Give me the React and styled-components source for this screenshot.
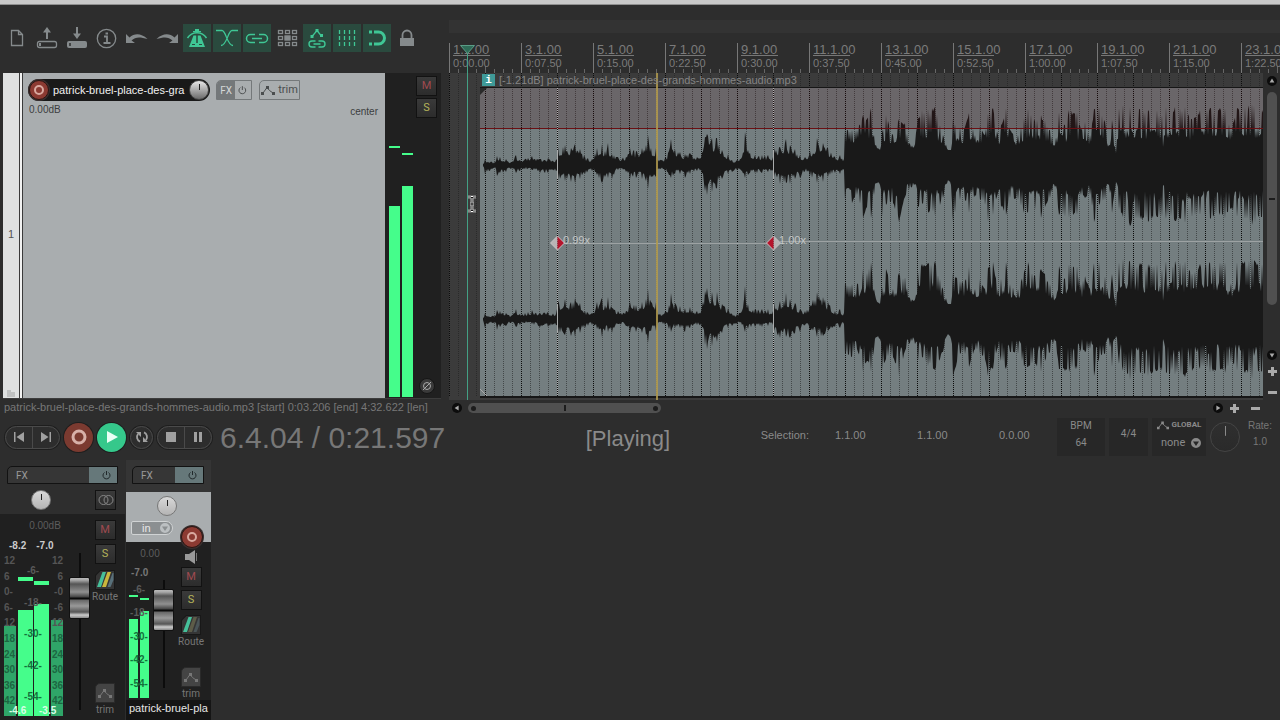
import { useState } from 'react';
import styled, { createGlobalStyle, css } from 'styled-components';

const BAR_WIDTH = 36;
const ITEM_LEFT = 31;

const marks = [
  ['1.1.00', '0:00.00'],
  ['3.1.00', '0:07.50'],
  ['5.1.00', '0:15.00'],
  ['7.1.00', '0:22.50'],
  ['9.1.00', '0:30.00'],
  ['11.1.00', '0:37.50'],
  ['13.1.00', '0:45.00'],
  ['15.1.00', '0:52.50'],
  ['17.1.00', '1:00.00'],
  ['19.1.00', '1:07.50'],
  ['21.1.00', '1:15.00'],
  ['23.1.00', '1:22.50'],
];

// [x, peak above the axis, peak below the axis]
const envelope = [
  [34, 1, 1], [36, 6, 9], [43, 3, 4], [47, 4, 4], [48, 9, 11], [51, 8, 8], [57, 6, 7], [62, 3, 4],
  [67, 10, 8], [71, 5, 6], [76, 6, 4], [83, 9, 5], [91, 6, 8], [99, 7, 8], [107, 5, 6],
  [109, 18, 15], [116, 20, 16], [122, 17, 17], [126, 21, 18], [131, 16, 14], [136, 8, 9], [143, 6, 6],
  [148, 17, 10], [153, 21, 18], [156, 14, 12], [159, 22, 13], [163, 11, 14], [169, 8, 5], [177, 8, 7],
  [181, 17, 14], [187, 14, 13], [193, 17, 14], [197, 20, 16], [199, 30, 24], [202, 17, 12], [207, 17, 12],
  [209, 5, 4], [216, 7, 6], [220, 14, 10], [222, 26, 13], [226, 16, 9], [231, 13, 9], [236, 11, 13],
  [241, 12, 9], [248, 8, 6], [253, 12, 8], [256, 28, 26], [258, 31, 30], [263, 27, 27], [268, 27, 23],
  [273, 15, 14], [279, 11, 9], [283, 5, 7], [288, 5, 5], [293, 8, 6], [296, 33, 13], [299, 15, 10],
  [306, 10, 8], [313, 10, 8], [319, 10, 7], [324, 8, 6], [325, 17, 12], [331, 18, 19], [337, 26, 18],
  [341, 20, 19], [346, 16, 14], [351, 10, 13], [356, 8, 6], [361, 14, 11], [368, 27, 18], [374, 22, 17],
  [379, 17, 12], [386, 8, 8], [391, 10, 9], [395, 6, 5], [396, 36, 35], [403, 35, 38], [408, 35, 30],
  [414, 50, 53], [418, 46, 42], [422, 57, 53], [425, 30, 30], [427, 20, 18], [431, 15, 20], [433, 32, 52],
  [437, 50, 40], [444, 30, 38], [450, 46, 57], [456, 42, 32], [460, 22, 25], [465, 18, 20], [469, 47, 42],
  [473, 55, 38], [479, 56, 47], [486, 58, 51], [491, 40, 40], [494, 30, 33], [499, 15, 15], [502, 15, 20],
  [504, 47, 57], [511, 38, 35], [516, 38, 35], [520, 52, 48], [526, 30, 30], [531, 40, 35], [536, 30, 40],
  [539, 52, 57], [544, 57, 50], [549, 30, 28], [552, 40, 42], [557, 57, 50], [561, 35, 33], [569, 30, 35],
  [575, 47, 48], [579, 57, 48], [586, 44, 45], [592, 50, 53], [596, 45, 42], [601, 35, 33], [606, 20, 22],
  [610, 53, 50], [616, 40, 52], [620, 55, 53], [628, 53, 50], [632, 35, 30], [636, 43, 33], [641, 30, 30],
  [645, 56, 57], [650, 58, 40], [656, 43, 35], [660, 20, 20], [663, 45, 48], [667, 12, 17], [670, 57, 45],
  [674, 60, 52], [681, 58, 61], [691, 56, 54], [699, 55, 57], [708, 55, 52], [713, 50, 52], [714, 18, 20],
  [717, 58, 54], [726, 58, 56], [736, 58, 58], [743, 46, 52], [751, 55, 50], [761, 57, 54], [771, 57, 50],
  [776, 57, 54], [782, 36, 44], [788, 57, 52], [796, 58, 54], [803, 61, 60], [813, 55, 52], [900, 55, 52],
];

const random = (seed) => {
  let s = seed;
  return () => {
    s = (s * 16807) % 2147483647;
    return s / 2147483647;
  };
};

const peakAt = (x, side) => {
  const i = envelope.findIndex((p) => p[0] >= x);
  if (i < 1) return envelope[0][side];
  const [a, b] = [envelope[i - 1], envelope[i]];
  return a[side] + ((b[side] - a[side]) * (x - a[0])) / (b[0] - a[0]);
};

const wavePath = (axis, seed) => {
  const next = random(seed);
  const top = [];
  const bottom = [];
  for (let x = 34; x < 880; x += 1) {
    const loud = x > 395;
    const isPeak = envelope.some((p) => p[0] === x);
    const pick = (side) => {
      const peak = peakAt(x, side);
      const floor = loud ? Math.min(peak, 12 + peak * 0.25) : peak * 0.5;
      const r = isPeak ? 1 : next();
      const spread = loud ? (r > 0.6 ? 0.6 + r * 0.4 : r * 0.6) : r * r;
      return floor + (peak - floor) * spread;
    };
    top.push(`${x} ${(axis - pick(1)).toFixed(1)}`);
    bottom.unshift(`${x} ${(axis + pick(2)).toFixed(1)}`);
  }
  return `M${top.join('L')}L${bottom.join('L')}Z`;
};

const waves = [
  { channel: 'left', d: wavePath(92, 77) },
  { channel: 'right', d: wavePath(246, 4021) },
];

/* ---------- toolbar icons ---------- */

const Icon = ({ children }) => (
  <svg width="28" height="28" viewBox="0 0 28 28" fill="none" stroke="currentColor" strokeWidth="1.3" aria-hidden="true">
    {children}
  </svg>
);

const tools = [
  { name: 'New project', icon: <path d="M8.5 6.500h7l4 4v11h-11zM15.500 6.500v4h4" /> },
  {
    name: 'Open project',
    icon: (
      <>
        <rect x="4.5" y="17.5" width="19" height="6" rx="2" />
        <path d="M14 15V6" strokeWidth="2" />
        <path d="M10 8.500 14 3l4 5.500z" fill="currentColor" stroke="none" />
        <path d="M7 19v3" strokeWidth="2" />
      </>
    ),
  },
  {
    name: 'Save project',
    icon: (
      <>
        <rect x="4" y="17" width="20" height="7" rx="2" fill="currentColor" stroke="none" />
        <path d="M14 3v8" strokeWidth="2" />
        <path d="M10 9.500 14 15l4-5.500z" fill="currentColor" stroke="none" />
        <path d="M7 19v3" stroke="#2d2d2d" strokeWidth="1.5" />
      </>
    ),
  },
  {
    name: 'Project settings',
    icon: (
      <>
        <circle cx="13.5" cy="14.5" r="9.2" />
        <path d="M11 12.500h3V19M10.500 19h7" strokeWidth="1.8" />
        <path d="M12.500 9.500h2.500" strokeWidth="2" />
      </>
    ),
  },
  {
    name: 'Undo',
    icon: <path d="M3 10v9h9l-3.500-2.500c4-4 9-3.500 16-1.500C18 9 11.500 9 6.500 13.500z" fill="currentColor" stroke="none" />,
  },
  {
    name: 'Redo',
    icon: <path d="M25 10v9h-9l3.500-2.500c-4-4-9-3.500-16-1.500C10 9 16.500 9 21.500 13.500z" fill="currentColor" stroke="none" />,
  },
  {
    name: 'Metronome',
    on: true,
    icon: (
      <>
        <path d="M4.500 14C9 7 19 7 23.500 14" strokeWidth="1.5" />
        <path d="M12 5h4v2h2v1h-8V7h2zM10.500 11.500h7L22 23H6z" fill="currentColor" stroke="none" />
        <path d="M14 11v8" stroke="#2a4a3e" strokeWidth="1.5" />
        <path d="M9 20.500h3M16 20.500h3" stroke="#2a4a3e" strokeWidth="1" />
      </>
    ),
  },
  {
    name: 'Auto crossfade',
    on: true,
    icon: <path d="M3 6.500h6c4 0 5 15 11 15M25 6.500h-6c-4 0-5 15-11 15" />,
  },
  {
    name: 'Item grouping',
    on: true,
    icon: (
      <>
        <path d="M12 10.500H7.500a4 4 0 0 0 0 8H12M16 10.500h4.500a4 4 0 0 1 0 8H16" strokeWidth="1.5" />
        <path d="M9 14.500h10" strokeWidth="1.5" />
      </>
    ),
  },
  {
    name: 'Ripple editing',
    icon: (
      <>
        {[6.5, 12.5, 18.5].map((y) =>
          [5.5, 12.5, 19.5].map((x) => <rect key={`${x}-${y}`} x={x} y={y} width="4" height="3" />),
        )}
        <rect x="12" y="12" width="5" height="4" fill="currentColor" />
      </>
    ),
  },
  {
    name: 'Move envelope points with items',
    on: true,
    icon: (
      <>
        <path d="M9 12.500 14 6.500l4 5" />
        <path d="M7.500 11h3v3h-3zM12.500 5h3v3h-3zM17 10h3v3h-3z" fill="currentColor" stroke="none" />
        <path d="M12.500 17H9a3 3 0 0 0 0 6h3.500M15.500 17H19a3 3 0 0 1 0 6h-3.500M10.500 20h7" strokeWidth="1.4" />
      </>
    ),
  },
  {
    name: 'Grid lines',
    on: true,
    icon: <path d="M6.500 6v17M11.500 6v17M16.500 6v17M21.500 6v17" strokeDasharray="4 2" />,
  },
  {
    name: 'Snapping',
    on: true,
    icon: (
      <>
        <path d="M11 8h4.500a6 6 0 0 1 0 12H11" strokeWidth="3" />
        <path d="M6 8h3M6 20h3" strokeWidth="3" />
      </>
    ),
  },
  {
    name: 'Lock',
    icon: (
      <>
        <path d="M9.500 14v-3a4.500 4.500 0 0 1 9 0v3" strokeWidth="1.8" />
        <rect x="7" y="14" width="14" height="8" fill="currentColor" stroke="none" />
      </>
    ),
  },
];

const Power = () => (
  <svg width="9" height="10" viewBox="0 0 9 10" fill="none" stroke="currentColor" aria-hidden="true">
    <path d="M2.500 2.500a3.500 3.500 0 1 0 4 0M4.500 1v4" />
  </svg>
);

const TrimShape = ({ width = 14 }) => (
  <svg width={width} height="10" viewBox="0 0 14 10" fill="none" stroke="currentColor" aria-hidden="true">
    <path d="M2 8 6 2.500l2.500 3L12 8" />
    <path d="M0 7h3v3H0zM5 1h3v3H5zM11 7h3v3h-3z" fill="currentColor" stroke="none" />
  </svg>
);

const RouteShape = ({ second, third }) => (
  <svg width="20" height="20" viewBox="0 0 20 20" aria-hidden="true">
    <path d="M5 0h15v20H0V5z" fill="#181818" />
    <path d="M5.500 1h13.500v18H1V5.500z" fill="#353535" />
    <path d="M7.500 2h3.500L6 17H2z" fill="#46c09a" />
    <path d="M12.500 2H16l-5 15H7z" fill={second} />
    <path d="M17.500 3h1v7l-3 7h-3z" fill={third} />
  </svg>
);

const Glyph = ({ d }) => (
  <svg width="10" height="10" viewBox="0 0 10 10" aria-hidden="true">
    <path d={d} fill="currentColor" />
  </svg>
);

const PLUS = 'M4 1h3v3h3v3H7v3H4V7H1V4h3z';
const MINUS = 'M1 4h9v3H1z';
const DROP = 'M5 0a5 5 0 1 0 0 10A5 5 0 0 0 5 0zM2 3.500h6L5 8z';

function Waveform() {
  return (
    <WaveSvg aria-label="Stereo waveform">
      <defs>
        <pattern id="grid" width={BAR_WIDTH} height="2" patternUnits="userSpaceOnUse">
          <path d="M0 0h1v1H0z" fill="#0c0c0c" />
          <path d="M9 0h1v1H9zM18 0h1v1h-1zM27 0h1v1h-1z" fill="#1c1c1c" fillOpacity="0.55" />
        </pattern>
      </defs>
      <rect width="100%" height="327" fill="#3b3b3b" />
      <rect x={ITEM_LEFT} y="15" width="100%" height="308" fill="#747e80" />
      <rect width="100%" height="323" fill="url(#grid)" />
      <g fill="#191919">
        {waves.map((wave) => <path key={wave.channel} d={wave.d} />)}
      </g>
      <rect x={ITEM_LEFT} y="15" width="100%" height="40" fill="#460a10" fillOpacity="0.2" />
      <rect x={ITEM_LEFT} y="14" width="100%" height="1" fill="#161616" />
      <rect x={ITEM_LEFT} y="55" width="100%" height="1" fill="#6a0f13" />
      <rect x={ITEM_LEFT} y="323" width="100%" height="2" fill="#161616" />
      <path d="M31 15h7l-7 7z" fill="#2a2a2a" />
      <path d="M31 316l7 7" stroke="#aaa" />
      <path d="M108.500 15v308M324.500 15v308" stroke="#c4c6c6" strokeDasharray="1 1" strokeOpacity="0.8" />
      <path d="M108.500 78v28M108.500 232v28M324.500 78v28M324.500 232v28" stroke="#a9abab" />
      <path d="M115 170.500h205" stroke="#9da2a3" />
      <rect x="331" y="168" width="100%" height="1" fill="#9da2a3" />
      <path d="M108.500 163v14l-7-7zM324.500 163v14l7-7z" fill="#b9b4b5" />
      <path d="M108.500 163v14l7-7zM324.500 163v14l-7-7z" fill="#b5142c" />
      <path d="M108.500 163l7 7-7 7-7-7zM324.500 163l7 7-7 7-7-7z" fill="none" stroke="#c9c4c5" />
      <text x="114" y="171">0.99x</text>
      <text x="330" y="171">1.00x</text>
      <rect x="18" width="1" height="327" fill="#43a084" />
      <rect x="207" width="2" height="327" fill="#b39b4e" fillOpacity="0.85" />
      <path d="M19 124h3l1 1 1-1h3M23 125v12M19 138h3l1-1 1 1h3M21 131h4" fill="none" stroke="#fff" strokeWidth="2.6" />
      <path d="M19 124h3l1 1 1-1h3M23 125v12M19 138h3l1-1 1 1h3M21 131h4" fill="none" stroke="#111" />
    </WaveSvg>
  );
}

function MasterMeter() {
  const outer = ['12', '6', '0', '6', '12', '18', '24', '30', '36', '42'];
  const inner = ['-6-', '-18-', '-30-', '-42-', '-54-'];
  return (
    <MeterSvg width="60" height="163" aria-label="Master level">
      <path d="M0 73h12v90H0zM47 67h12v96H47z" fill="#2fa568" />
      <path d="M14 57h15v106H14zM30 51h15v112H30z" fill="#45fd8b" />
      <path d="M14 24h15v4H14zM30 28h15v4H30z" fill="#45fd8b" />
      {outer.map((label, i) => {
        const y = 11 + Math.round(i * 15.6);
        const dashed = i === 2 || i === 3;
        return (
          <g key={y} fill={i > 4 ? '#1c6641' : '#555'}>
            <text x="0" y={y}>{dashed ? `${label}-` : label}</text>
            <text x="59" y={y} textAnchor="end">{dashed ? `-${label}` : label}</text>
          </g>
        );
      })}
      {inner.map((label, i) => (
        <text key={label} x="29" y={[21, 53, 84, 116, 147][i]} textAnchor="middle" fill={i < 2 ? '#5a5a5a' : '#14703c'}>
          {label}
        </text>
      ))}
      <text x="5" y="161" fill="#d9ffe8">-4.6</text>
      <text x="35" y="161" fill="#d9ffe8">-3.5</text>
    </MeterSvg>
  );
}

function TrackMeter() {
  const labels = ['-6-', '-18-', '-30-', '-42-', '-54-'];
  return (
    <MeterSvg width="22" height="118" aria-label="Track level">
      <path d="M1 39h9v79H1zM12 31h9v87h-9z" fill="#45fd8b" />
      <path d="M1 15h9v2H1zM12 18h9v2h-9z" fill="#45fd8b" />
      {labels.map((label, i) => (
        <text key={label} x="11" y={[13, 36, 60, 83, 107][i]} textAnchor="middle" fill={i < 2 ? '#5a5a5a' : '#14703c'}>
          {label}
        </text>
      ))}
    </MeterSvg>
  );
}

function RecordRing({ size }) {
  return (
    <RecordButton $size={size} aria-label="Record arm">
      <svg width="12" height="12" viewBox="0 0 12 12" aria-hidden="true">
        <circle cx="6" cy="6" r="4" fill="none" stroke="#d9a9a0" strokeWidth="2" />
      </svg>
    </RecordButton>
  );
}

export default function App() {
  const [trackName, setTrackName] = useState('patrick-bruel-place-des-gra');

  return (
    <Page>
      <Global />
      <TitleBar />
      <Workspace>
        <LeftPane>
          <Toolbar>
            {tools.map((tool) => (
              <ToolButton key={tool.name} $on={tool.on} aria-label={tool.name}>
                <Icon>{tool.icon}</Icon>
              </ToolButton>
            ))}
          </Toolbar>
          <Track>
            <TrackIndex>
              <span>1</span>
              <svg width="8" height="7" viewBox="0 0 8 7" aria-hidden="true">
                <path d="M0 0h4v2h4v5H0z" fill="#bfc1c1" />
              </svg>
            </TrackIndex>
            <TrackBody>
              <TrackControls>
                <NamePill>
                  <RecordRing size={20} />
                  <NameInput aria-label="Track name" value={trackName} onChange={(e) => setTrackName(e.target.value)} />
                  <Knob $size={20} type="range" defaultValue="50" aria-label="Volume" />
                </NamePill>
                <OutlineButton>
                  <FxLabel>FX</FxLabel>
                  <Power />
                </OutlineButton>
                <OutlineButton $wide>
                  <TrimShape />
                  trim
                </OutlineButton>
              </TrackControls>
              <TrackValues>
                <span>0.00dB</span>
                <span>center</span>
              </TrackValues>
            </TrackBody>
            <LevelBars>
              <LevelBar $peak={73} $level={133} />
              <LevelBar $peak={80} $level={113} />
            </LevelBars>
            <TrackSide>
              <SquareButton $color="#a04a50">M</SquareButton>
              <SquareButton $color="#b5b35a">S</SquareButton>
              <PhaseButton aria-label="Invert phase">
                <svg width="10" height="10" viewBox="0 0 10 10" fill="none" stroke="currentColor" aria-hidden="true">
                  <circle cx="5" cy="5" r="3.5" />
                  <path d="M1 9 9 1" />
                </svg>
              </PhaseButton>
            </TrackSide>
          </Track>
          <StatusLine>patrick-bruel-place-des-grands-hommes-audio.mp3 [start] 0:03.206 [end] 4:32.622 [len]</StatusLine>
        </LeftPane>
        <Arrange>
          <RegionLane />
          <Ruler>
            {marks.map(([bar, time]) => (
              <Mark key={bar}>
                <MarkBar>{bar}</MarkBar>
                <span>{time}</span>
              </Mark>
            ))}
            <EditCursor width="16" height="28" viewBox="0 0 16 28" aria-hidden="true">
              <path d="M7 8h1v20H7z" fill="#43a084" />
              <path d="M0.500 0.500h14L7.500 8.500z" fill="#2f6b57" stroke="#5b9c86" />
            </EditCursor>
          </Ruler>
          <Lanes>
            <Canvas>
              <Waveform />
              <ItemLabel>
                <InfoBadge>i</InfoBadge>
                [-1.21dB] patrick-bruel-place-des-grands-hommes-audio.mp3
              </ItemLabel>
            </Canvas>
            <VerticalScroll>
              <ArrowButton aria-label="Scroll up"><Glyph d="M5 2l3 5H2z" /></ArrowButton>
              <ScrollThumb $vertical><i /></ScrollThumb>
              <ScrollSpace />
              <ArrowButton aria-label="Scroll down"><Glyph d="M5 8l3-5H2z" /></ArrowButton>
              <ZoomButton aria-label="Zoom in vertically"><Glyph d={PLUS} /></ZoomButton>
              <ZoomDivider />
              <ZoomButton aria-label="Zoom out vertically"><Glyph d={MINUS} /></ZoomButton>
            </VerticalScroll>
          </Lanes>
          <HorizontalScroll>
            <ArrowButton aria-label="Scroll left"><Glyph d="M2 5l5-3v6z" /></ArrowButton>
            <ScrollThumb><b /><i /><b /></ScrollThumb>
            <ScrollSpace />
            <ArrowButton aria-label="Scroll right"><Glyph d="M8 5L3 2v6z" /></ArrowButton>
            <ZoomButton aria-label="Zoom in"><Glyph d={PLUS} /></ZoomButton>
            <ZoomDivider />
            <ZoomButton aria-label="Zoom out"><Glyph d={MINUS} /></ZoomButton>
          </HorizontalScroll>
        </Arrange>
      </Workspace>

      <Transport>
        <PillGroup>
          <PillButton aria-label="Go to start"><Glyph d="M0 0h1.500v10H0zM10 0v10L2.500 5z" /></PillButton>
          <PillButton aria-label="Go to end"><Glyph d="M8.500 0H10v10H8.500zM0 0v10l7.500-5z" /></PillButton>
        </PillGroup>
        <RoundButton $kind="record" aria-label="Record">
          <svg width="16" height="16" aria-hidden="true">
            <circle cx="8" cy="8" r="6" fill="none" stroke="#d8b0a8" strokeWidth="3" />
          </svg>
        </RoundButton>
        <RoundButton $kind="play" aria-label="Play">
          <svg width="12" height="12" aria-hidden="true"><path d="M1 0l11 6-11 6z" fill="#e9fff5" /></svg>
        </RoundButton>
        <RoundButton $kind="repeat" aria-label="Repeat">
          <svg width="14" height="14" fill="none" stroke="#a0a0a0" strokeWidth="1.8" aria-hidden="true">
            <path d="M9 2.400A5 5 0 0 1 11 10M5 11.600A5 5 0 0 1 3 4" />
            <path d="M1 2h5v5zM13 12H8V7z" fill="#a0a0a0" stroke="none" />
          </svg>
        </RoundButton>
        <PillGroup>
          <PillButton aria-label="Stop"><Glyph d="M0 0h10v10H0z" /></PillButton>
          <PillButton aria-label="Pause"><Glyph d="M1 0h3v10H1zM6 0h3v10H6z" /></PillButton>
        </PillGroup>
        <Position>6.4.04 / 0:21.597</Position>
        <PlayState>[Playing]</PlayState>
        <SelectionLabel>Selection:</SelectionLabel>
        <SelectionValue>1.1.00</SelectionValue>
        <SelectionValue>1.1.00</SelectionValue>
        <SelectionValue>0.0.00</SelectionValue>
        <InfoBox $width={48}>
          <span>BPM</span>
          <span>64</span>
        </InfoBox>
        <InfoBox $width={39}>4/4</InfoBox>
        <InfoBox $width={54}>
          <GlobalLabel><TrimShape width={12} /> GLOBAL</GlobalLabel>
          <SelectWrap>
            <PlainSelect aria-label="Global automation" defaultValue="none"><option>none</option></PlainSelect>
            <Glyph d={DROP} />
          </SelectWrap>
        </InfoBox>
        <Knob $size={30} $dark type="range" defaultValue="50" aria-label="Play rate" />
        <Rate>
          <span>Rate:</span>
          <span>1.0</span>
        </Rate>
      </Transport>

      <Mixer>
        <MasterStrip>
          <StripHead>
            <FxButton>FX <FxPower><Power /></FxPower></FxButton>
            <KnobRow>
              <Knob $size={20} $light type="range" defaultValue="50" aria-label="Master pan" />
              <SquareButton aria-label="Stereo mode" $color="#888">
                <svg width="16" height="12" fill="none" stroke="currentColor" aria-hidden="true">
                  <circle cx="5.5" cy="6" r="4.5" />
                  <circle cx="10.5" cy="6" r="4.5" />
                </svg>
              </SquareButton>
            </KnobRow>
          </StripHead>
          <StripBody>
            <MeterColumn>
              <Gain>0.00dB</Gain>
              <PeakRow>
                <span>-8.2</span>
                <span>-7.0</span>
              </PeakRow>
              <MeterRow>
                <MasterMeter />
                <Fader $height={157} type="range" defaultValue="79" aria-label="Master volume" />
              </MeterRow>
            </MeterColumn>
            <ButtonColumn>
              <SquareButton $color="#a04a50">M</SquareButton>
              <SquareButton $color="#b5b35a">S</SquareButton>
              <CaptionButton>
                <RouteShape second="#c9b63c" third="#58707a" />
                Route
              </CaptionButton>
              <CaptionButton $last>
                <TrimTile><TrimShape /></TrimTile>
                trim
              </CaptionButton>
            </ButtonColumn>
          </StripBody>
        </MasterStrip>

        <TrackStrip>
          <TrackHead>
            <FxButton>FX <FxPower><Power /></FxPower></FxButton>
          </TrackHead>
          <InputPanel>
            <Knob $size={20} $light type="range" defaultValue="50" aria-label="Track pan" />
            <InputRow>
              <SelectWrap $outlined>
                <PlainSelect aria-label="Input" defaultValue="in"><option>in</option></PlainSelect>
                <Glyph d={DROP} />
              </SelectWrap>
              <RecordRing size={22} />
            </InputRow>
          </InputPanel>
          <TrackStripBody>
            <TrackMeterColumn>
              <Gain>0.00</Gain>
              <TrackPeak>-7.0</TrackPeak>
              <MeterRow $tight>
                <TrackMeter />
                <Fader $height={108} type="range" defaultValue="86" aria-label="Track volume" />
              </MeterRow>
            </TrackMeterColumn>
            <ButtonColumn $compact>
              <svg width="14" height="14" viewBox="0 0 14 14" aria-label="Monitor">
                <path d="M1 4h4l6-4v14l-6-4H1z" fill="#999" />
                <path d="M12.500 3v8" stroke="#777" />
              </svg>
              <SquareButton $color="#a04a50">M</SquareButton>
              <SquareButton $color="#b5b35a">S</SquareButton>
              <CaptionButton>
                <RouteShape second="#5d5c48" third="#4a5558" />
                Route
              </CaptionButton>
              <CaptionButton $last>
                <TrimTile><TrimShape /></TrimTile>
                trim
              </CaptionButton>
            </ButtonColumn>
          </TrackStripBody>
          <StripName>{trackName.slice(0, 17)}</StripName>
        </TrackStrip>
      </Mixer>
    </Page>
  );
}

const Global = createGlobalStyle`
  * {
    box-sizing: border-box;
  }

  body {
    margin: 0;
    background: #2d2d2d;
    overflow: hidden;
  }

  button, input, select {
    margin: 0;
    padding: 0;
    border: 0;
    font: inherit;
    color: inherit;
    background: none;
    appearance: none;
  }
`;

const Page = styled.div`
  display: flex;
  flex-direction: column;
  min-height: 100vh;
  background: #2d2d2d;
  color: #8a8a8a;
  font-family: "Liberation Sans", Arial, sans-serif;
  font-size: 11px;
  line-height: 12px;
`;

const TitleBar = styled.header`
  height: 5px;
  background: #c8c8c8;
  border-bottom: 1px solid #8f8f8f;
`;

const Workspace = styled.main`
  display: flex;
  gap: 8px;
`;

const LeftPane = styled.section`
  flex: 0 0 441px;
  padding-left: 3px;
`;

const Toolbar = styled.div`
  display: flex;
  gap: 2px;
  height: 68px;
  padding-top: 19px;
`;

const ToolButton = styled.button`
  width: 28px;
  height: 28px;
  color: ${({ $on }) => ($on ? '#3fc795' : '#858a8c')};
  background: ${({ $on }) => ($on ? '#2a4a3e' : 'none')};

  svg {
    display: block;
  }
`;

const Track = styled.div`
  display: flex;
  height: 325px;
  background: #202020;
`;

const TrackIndex = styled.div`
  display: flex;
  flex-direction: column;
  align-items: center;
  justify-content: flex-end;
  gap: 150px;
  width: 20px;
  padding: 0 4px 1px 0;
  color: #555;
  background: linear-gradient(90deg, #dfe1e1 16px, #3a3a3a 16px, #3a3a3a 17px, #f2f2f2 17px, #f2f2f2 19px, #3a3a3a 19px);
`;

const TrackBody = styled.div`
  flex: 1;
  padding: 6px 7px 0 5px;
  background: #a9adaf;
  color: #3c3e3f;
`;

const TrackControls = styled.div`
  display: flex;
  gap: 6px;
`;

const NamePill = styled.div`
  display: flex;
  align-items: center;
  width: 182px;
  height: 22px;
  padding: 0 1px;
  border-radius: 11px;
  background: #191919;
`;

const NameInput = styled.input`
  flex: 1;
  min-width: 0;
  height: 20px;
  padding-left: 4px;
  margin-right: 3px;
  color: #f0f0f0;
`;

const RecordButton = styled.button`
  display: flex;
  align-items: center;
  justify-content: center;
  flex: none;
  width: ${({ $size }) => $size}px;
  height: ${({ $size }) => $size}px;
  border: 1px solid #2a1512;
  border-radius: 50%;
  background: #8c3a32;
  box-shadow: 0 0 0 1px #3a3030;
`;

const knobLook = ({ $light, $dark }) => {
  if ($dark) return 'linear-gradient(#2f2f2f, #2a2a2a)';
  if ($light) return 'linear-gradient(#d8d8d8, #b4b4b4)';
  return 'linear-gradient(#e8e8e8, #6a6a6a)';
};

const Knob = styled.input`
  flex: none;
  width: ${({ $size }) => $size}px;
  height: ${({ $size }) => $size}px;
  border: 1px solid ${({ $light }) => ($light ? '#777' : '#444')};
  border-radius: 50%;
  background:
    linear-gradient(${({ $dark }) => ($dark ? '#8a8a8a, #8a8a8a' : '#222, #222')}) 50% 3px / 1px 35% no-repeat,
    ${knobLook};

  &::-webkit-slider-thumb {
    opacity: 0;
  }
`;

const OutlineButton = styled.button`
  display: flex;
  align-items: center;
  justify-content: ${({ $wide }) => ($wide ? 'center' : 'space-between')};
  gap: 3px;
  width: ${({ $wide }) => ($wide ? 41 : 36)}px;
  height: 20px;
  margin-top: 1px;
  margin-left: ${({ $wide }) => ($wide ? 1 : 0)}px;
  padding-right: ${({ $wide }) => ($wide ? 0 : 4)}px;
  border: 1px solid #74787a;
  border-top-left-radius: 5px;
  color: #4a4d4e;
  font-family: Roboto, sans-serif;
`;

const FxLabel = styled.span`
  width: 19px;
  height: 18px;
  border-top-left-radius: 4px;
  background: #74787a;
  color: #d5d7d7;
  font-size: 10px;
  line-height: 19px;
`;

const TrackValues = styled.div`
  display: flex;
  justify-content: space-between;
  padding: 3px 0 0 1px;
  font-size: 10px;

  span + span {
    padding-top: 2px;
  }
`;

const LevelBars = styled.div`
  display: flex;
  gap: 2px;
  padding: 0 3px 0 4px;
`;

const LevelBar = styled.div`
  width: 11px;
  margin-bottom: 1px;
  background:
    linear-gradient(#45fd8b, #45fd8b) 0 ${({ $peak }) => $peak}px / 100% 2px no-repeat,
    linear-gradient(transparent ${({ $level }) => $level}px, #45fd8b ${({ $level }) => $level}px);
`;

const TrackSide = styled.div`
  display: flex;
  flex-direction: column;
  align-items: center;
  gap: 2px;
  width: 25px;
  padding: 3px 4px 4px 0;
`;

const SquareButton = styled.button`
  display: flex;
  align-items: center;
  justify-content: center;
  flex: none;
  width: 21px;
  height: 20px;
  border: 1px solid #121212;
  background: linear-gradient(#3a3a3a, #2c2c2c);
  color: ${({ $color }) => $color};
  font-family: Roboto, sans-serif;
`;

const PhaseButton = styled.button`
  display: flex;
  align-items: center;
  justify-content: center;
  width: 16px;
  height: 16px;
  margin-top: auto;
  border: 1px solid #161616;
  border-radius: 50%;
  background: #3a3a3a;
  color: #aaa;
`;

const StatusLine = styled.div`
  padding: 2px 0 0 1px;
  border-top: 1px solid #3c3c3c;
  color: #777;
  white-space: nowrap;
`;

const Arrange = styled.section`
  flex: 1;
  min-width: 0;
`;

const RegionLane = styled.div`
  height: 13px;
  margin-top: 15px;
  background: #333;
`;

const Ruler = styled.div`
  position: relative;
  display: flex;
  height: 40px;
  padding-top: 10px;
  overflow: hidden;
  color: #7b7b7b;
  background:
    repeating-linear-gradient(90deg, #666 0 1px, transparent 1px 36px) 0 100% / 100% 7px no-repeat,
    repeating-linear-gradient(90deg, #666 0 1px, transparent 1px 9px) 0 100% / 100% 4px no-repeat;
`;

const Mark = styled.div`
  flex: 0 0 72px;
  padding-left: 3px;
  border-left: 1px solid #777;
  line-height: 14px;
`;

const MarkBar = styled.div`
  width: 37px;
  height: 13px;
  border-bottom: 1px solid #777;
  font-size: 13px;
  white-space: nowrap;
`;

const EditCursor = styled.svg`
  position: absolute;
  left: 11px;
  top: 12px;
`;

const Lanes = styled.div`
  display: flex;
  height: 327px;
`;

const Canvas = styled.div`
  position: relative;
  flex: 1;
  min-width: 0;
  overflow: hidden;
`;

const WaveSvg = styled.svg`
  position: absolute;
  inset: 0;
  width: 100%;
  height: 100%;

  text {
    fill: #c3c6c6;
    font-size: 11px;
  }
`;

const ItemLabel = styled.div`
  position: relative;
  display: flex;
  align-items: center;
  gap: 4px;
  padding-left: 33px;
  height: 14px;
  color: #848484;
  white-space: nowrap;
`;

const InfoBadge = styled.span`
  width: 13px;
  height: 12px;
  background: #3f9a98;
  color: #fff;
  font: bold 11px/12px "Liberation Mono", monospace;
  text-align: center;
`;

const VerticalScroll = styled.div`
  display: flex;
  flex-direction: column;
  align-items: center;
  gap: 6px;
  width: 17px;
  padding: 3px 0;
  background: #2d2d2d;
`;

const HorizontalScroll = styled.div`
  display: flex;
  align-items: center;
  gap: 6px;
  height: 16px;
  padding: 0 20px 0 3px;
`;

const ArrowButton = styled.button`
  display: flex;
  align-items: center;
  justify-content: center;
  width: 10px;
  height: 10px;
  border-radius: 50%;
  background: #0c0c0c;
  color: #aaa;

  svg {
    width: 8px;
  }
`;

const ZoomButton = styled.button`
  display: flex;
  width: 10px;
  height: 10px;
  color: #aaa;
`;

const ZoomDivider = styled.span`
  width: 1px;
  height: 1px;
  margin: -1px;
`;

const ScrollThumb = styled.div`
  display: flex;
  align-items: center;
  justify-content: ${({ $vertical }) => ($vertical ? 'center' : 'space-between')};
  width: ${({ $vertical }) => ($vertical ? 10 : 193)}px;
  height: ${({ $vertical }) => ($vertical ? 213 : 10)}px;
  padding: 0 ${({ $vertical }) => ($vertical ? 0 : 3)}px;
  border-radius: 5px;
  background: #505050;

  i {
    width: ${({ $vertical }) => ($vertical ? 6 : 2)}px;
    height: ${({ $vertical }) => ($vertical ? 2 : 6)}px;
    background: #1c1c1c;
  }

  b {
    width: 5px;
    height: 5px;
    border-radius: 50%;
    background: #1c1c1c;
  }
`;

const ScrollSpace = styled.div`
  flex: 1;
`;

const Transport = styled.section`
  display: flex;
  align-items: center;
  gap: 4px;
  height: 44px;
  padding: 0 8px 2px 5px;
`;

const PillGroup = styled.div`
  display: flex;
  flex: none;
  width: 55px;
  height: 23px;
  border: 1px solid #4a4a4a;
  border-radius: 12px;
  box-shadow: 0 0 0 1px #1e1e1e;
`;

const PillButton = styled.button`
  display: flex;
  align-items: center;
  justify-content: center;
  flex: 1;
  color: #a0a0a0;

  & + & {
    border-left: 1px solid #4a4a4a;
  }
`;

const roundKinds = {
  record: css`
    width: 29px;
    height: 29px;
    background: #7b3a30;
  `,
  play: css`
    width: 29px;
    height: 29px;
    background: #35c88b;
  `,
  repeat: css`
    width: 23px;
    height: 23px;
    border: 1px solid #4a4a4a;
  `,
};

const RoundButton = styled.button`
  display: flex;
  align-items: center;
  justify-content: center;
  flex: none;
  border-radius: 50%;
  box-shadow: 0 0 0 1px #1e1e1e;
  ${({ $kind }) => roundKinds[$kind]}
`;

const Position = styled.div`
  padding: 2px 0 0 4px;
  font-size: 30px;
  line-height: 32px;
  color: #777;
  white-space: nowrap;
`;

const PlayState = styled.div`
  flex: 1;
  padding: 4px 0 0 50px;
  font-size: 22px;
  line-height: 30px;
  text-align: center;
`;

const SelectionLabel = styled.span`
  padding: 0 22px 4px 0;
`;

const SelectionValue = styled.span`
  width: 78px;
  padding-bottom: 4px;

  &:last-of-type {
    width: 54px;
  }
`;

const InfoBox = styled.div`
  display: flex;
  flex: none;
  flex-direction: column;
  align-items: center;
  justify-content: center;
  gap: 5px;
  width: ${({ $width }) => $width}px;
  height: 38px;
  padding-bottom: 6px;
  background: #272727;
  font-family: Roboto, sans-serif;
  font-size: 10px;
`;

const GlobalLabel = styled.div`
  display: flex;
  align-items: center;
  gap: 3px;
  font-size: 8px;
  font-weight: bold;
`;

const SelectWrap = styled.label`
  display: flex;
  align-items: center;
  justify-content: space-between;
  width: 44px;
  height: 14px;
  padding: 0 0 0 4px;

  ${({ $outlined }) => $outlined && css`
    width: 42px;
    padding: 0 2px 0 10px;
    border: 1px solid #d0d3d4;
    border-radius: 2px 7px 7px 2px;
    background: #8b8f91;
    color: #e8e8e8;

    svg {
      color: #bcc0c2;
    }
  `}
`;

const PlainSelect = styled.select`
  min-width: 0;
  font-size: 11px;
  line-height: 12px;
`;

const Rate = styled.div`
  display: flex;
  flex-direction: column;
  align-items: center;
  gap: 4px;
  width: 28px;
  padding: 0 0 6px 4px;
  color: #777;
  font-size: 10px;
`;

const Mixer = styled.section`
  display: flex;
  flex: 1;
  gap: 1px;
`;

const MasterStrip = styled.div`
  width: 125px;
  background: #202020;
`;

const StripHead = styled.div`
  display: flex;
  flex-direction: column;
  gap: 6px;
  padding: 6px 7px 4px;
  background: #2e2e2e;
`;

const FxButton = styled.button`
  display: flex;
  align-items: stretch;
  justify-content: space-between;
  width: 100%;
  height: 18px;
  padding-left: 8px;
  border: 1px solid #121212;
  border-top-left-radius: 5px;
  background: #363636;
  color: #999;
  font-family: Roboto, sans-serif;
  font-size: 10px;
  line-height: 17px;
`;

const FxPower = styled.span`
  display: flex;
  align-items: center;
  justify-content: flex-end;
  width: 28px;
  padding-right: 6px;
  background: #66787a;
  color: #20282a;
`;

const KnobRow = styled.div`
  display: flex;
  justify-content: space-between;
  padding: 0 2px 0 24px;
`;

const StripBody = styled.div`
  display: flex;
  gap: 3px;
  padding: 6px 0 2px 4px;
`;

const MeterColumn = styled.div`
  width: 86px;
`;

const Gain = styled.div`
  height: 20px;
  padding-right: 4px;
  color: #5d5d5d;
  font-size: 10px;
  text-align: center;
`;

const PeakRow = styled.div`
  display: flex;
  gap: 10px;
  height: 13px;
  padding-left: 5px;
  color: #ccc;
  font-size: 10px;
  font-weight: bold;
`;

const MeterRow = styled.div`
  display: flex;
  align-items: flex-start;
  gap: ${({ $tight }) => ($tight ? 3 : 5)}px;
`;

const MeterSvg = styled.svg`
  flex: none;
  font-size: 10px;
  font-weight: bold;
`;

const Fader = styled.input`
  width: 21px;
  height: ${({ $height }) => $height}px;
  writing-mode: vertical-lr;
  direction: rtl;
  background: linear-gradient(#0c0c0c, #0c0c0c) 50% 0 / 2px 100% no-repeat;

  &::-webkit-slider-thumb {
    appearance: none;
    width: 21px;
    height: 42px;
    border: 1px solid #111;
    border-radius: 2px;
    background: linear-gradient(#bbb 0, #aaa 2px, #555 6px, #909090 14px, #444 19px, #0a0a0a 20px, #0a0a0a 21px, #666 22px, #999 28px, #555 34px, #ccc 37px, #888 100%);
  }
`;

const ButtonColumn = styled.div`
  display: flex;
  flex-direction: column;
  align-items: center;
  gap: ${({ $compact }) => ($compact ? 3 : 4)}px;
  padding-top: ${({ $compact }) => ($compact ? 8 : 0)}px;
  color: #777;
  font-family: Roboto, sans-serif;
`;

const CaptionButton = styled.button`
  display: flex;
  flex-direction: column;
  align-items: center;
  width: 24px;
  margin-top: ${({ $last }) => ($last ? 'auto' : '2px')};
  font-size: 10px;
  line-height: 13px;
`;

const TrimTile = styled.span`
  display: flex;
  align-items: center;
  justify-content: center;
  width: 20px;
  height: 20px;
  border: 1px solid #2a2a2a;
  border-top-left-radius: 5px;
  background: #444;
`;

const TrackStrip = styled.div`
  display: flex;
  flex-direction: column;
  width: 85px;
  background: #202020;
`;

const TrackHead = styled.div`
  height: 32px;
  padding: 6px 7px 0 6px;
  background: #353535;
`;

const InputPanel = styled.div`
  display: flex;
  flex-direction: column;
  align-items: center;
  height: 50px;
  padding: 4px 8px 0 5px;
  background: #a9adaf;
`;

const InputRow = styled.div`
  display: flex;
  justify-content: space-between;
  width: 100%;
  margin-top: 5px;

  button {
    margin-top: 5px;
  }
`;

const TrackStripBody = styled.div`
  display: flex;
  flex: 1;
  gap: 3px;
  padding-left: 2px;
`;

const TrackMeterColumn = styled.div`
  width: 48px;
  padding-top: 6px;
`;

const TrackPeak = styled.div`
  height: 12px;
  padding-left: 3px;
  color: #777;
  font-size: 10px;
  font-weight: bold;
  line-height: 10px;
`;

const StripName = styled.div`
  padding: 2px 3px 6px;
  background: #151515;
  color: #e6e6e6;
  white-space: nowrap;
`;
